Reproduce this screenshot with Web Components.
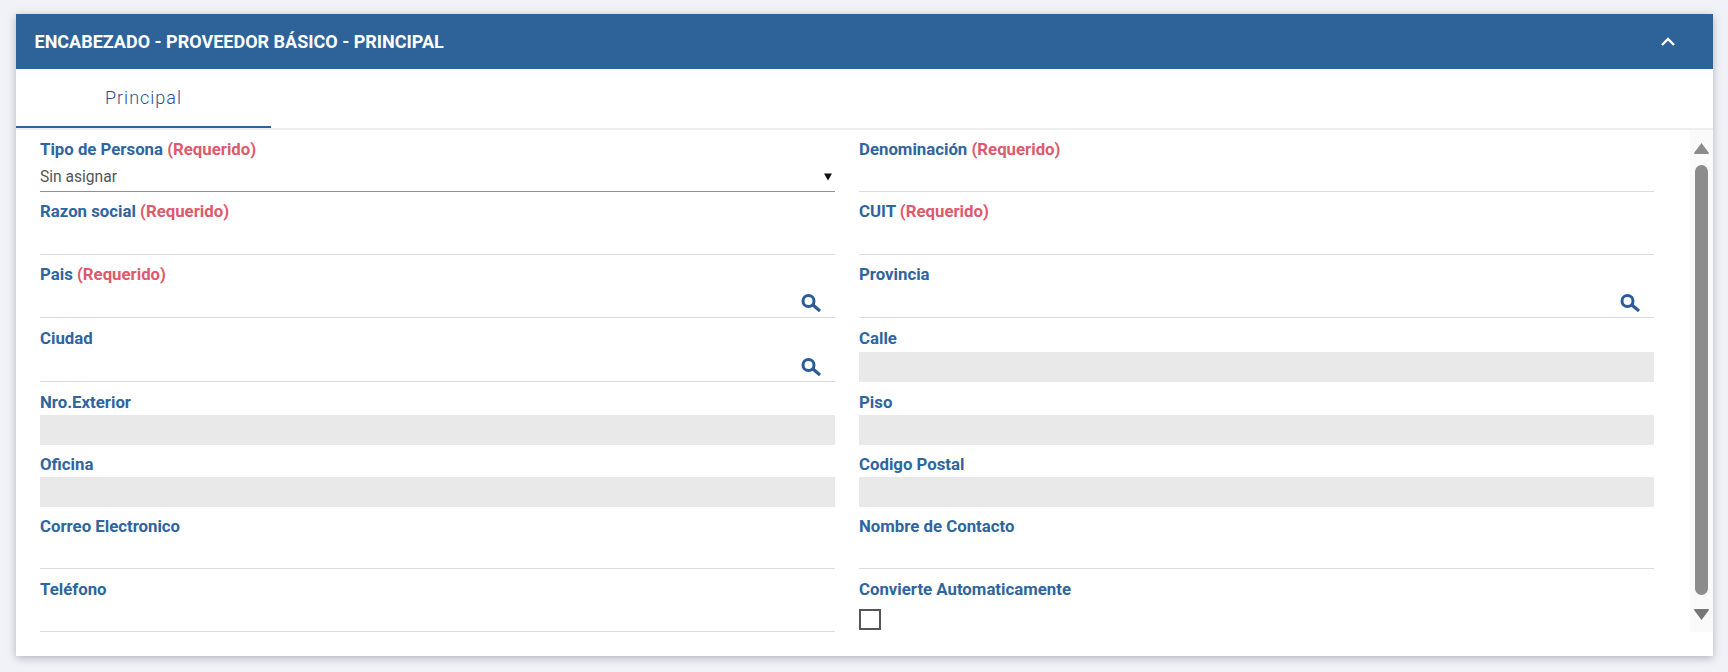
<!DOCTYPE html>
<html lang="es">
<head>
<meta charset="utf-8">
<title>Proveedor básico</title>
<style>
  html, body { margin: 0; height: 100%; }
  body { background: #f0f2f7; font-family: Roboto, "Liberation Sans", sans-serif; overflow: hidden; }
</style>
</head>
<body>
<form-panel title-text="ENCABEZADO - PROVEEDOR BÁSICO - PRINCIPAL">
  <panel-tab>Principal</panel-tab>
  <form-field kind="select" value="Sin asignar" required height="62">Tipo de Persona</form-field>
  <form-field required height="62">Denominación</form-field>
  <form-field required height="63">Razon social</form-field>
  <form-field required height="63">CUIT</form-field>
  <form-field kind="search" required height="63">Pais</form-field>
  <form-field kind="search" height="63">Provincia</form-field>
  <form-field kind="search" height="64" label-top="10">Ciudad</form-field>
  <form-field kind="disabled" height="64" label-top="10">Calle</form-field>
  <form-field kind="disabled" height="63" label-top="10">Nro.Exterior</form-field>
  <form-field kind="disabled" height="63" label-top="10">Piso</form-field>
  <form-field kind="disabled" height="62">Oficina</form-field>
  <form-field kind="disabled" height="62">Codigo Postal</form-field>
  <form-field height="62">Correo Electronico</form-field>
  <form-field height="62">Nombre de Contacto</form-field>
  <form-field height="63" label-top="10">Teléfono</form-field>
  <form-field kind="checkbox" height="63" label-top="10">Convierte Automaticamente</form-field>
</form-panel>

<script>
// pestaña del panel
class PanelTab extends HTMLElement {
  constructor() {
    super();
    this.attachShadow({ mode: "open" });
    this.shadowRoot.innerHTML = `
      <style>
        :host {
          display: flex; align-items: center; justify-content: center;
          width: 255px; height: 57px; box-sizing: border-box; padding-bottom: 2px;
          border-bottom: 2px solid #2e6399;
          color: #2b4f96; font-size: 18px; font-weight: 300; letter-spacing: 1px;
        }
      </style>
      <slot></slot>`;
  }
}

// campo del formulario: label + control segun "kind"
class FormField extends HTMLElement {
  constructor() {
    super();
    this.attachShadow({ mode: "open" });
  }
  connectedCallback() {
    const kind = this.getAttribute("kind") || "text";
    const required = this.hasAttribute("required") ? `<span class="req"> (Requerido)</span>` : "";
    const labelTop = this.getAttribute("label-top") || 9;
    let control = `<div class="control line"></div>`;
    if (kind === "select") {
      control = `<div class="control select"><span>${this.getAttribute("value")}</span>
        <svg width="8" height="8" viewBox="0 0 8 8"><polygon points="0,0.5 8,0.5 4,7.5" fill="#111"/></svg></div>`;
    } else if (kind === "search") {
      control = `<div class="control line search">
        <svg width="20" height="18" viewBox="0 0 20 18" fill="none" stroke="#2a5c9a">
          <circle cx="7.5" cy="7" r="5.5" stroke-width="3"/>
          <path d="M12 11 L19 17" stroke-width="3.2"/>
        </svg></div>`;
    } else if (kind === "disabled") {
      control = `<div class="control gray"></div>`;
    } else if (kind === "checkbox") {
      control = `<div class="control check"><div class="box"></div></div>`;
    }
    this.shadowRoot.innerHTML = `
      <style>
        :host { display: flex; flex-direction: column; height: ${this.getAttribute("height")}px; box-sizing: border-box; justify-content: flex-end; }
        label { display: block; height: 20px; line-height: 20px; margin-bottom: auto; padding-top: ${labelTop}px; font-size: 16.8px; font-weight: 700; color: #2f659e; white-space: nowrap; }
        .req { color: #dd5a6c; }
        .control { box-sizing: border-box; height: 29px; }
        .line { border-bottom: 1px solid #dcdcdc; }
        .search { display: flex; justify-content: flex-end; align-items: flex-start; padding: 5px 14px 0 0; }
        .select { display: flex; justify-content: space-between; align-items: center; border-bottom: 1px solid #8f8f8f; padding: 0 3px 0 0; font-size: 15.6px; color: #555; }
        .gray { background: #e9e9e9; height: 30px; }
        .check { height: 23px; }
        .box { width: 22px; height: 21px; box-sizing: border-box; border: 2px solid #555; }
      </style>
      <label><slot></slot>${required}</label>
      ${control}`;
  }
}

// barra de scroll dibujada
class ScrollRail extends HTMLElement {
  constructor() {
    super();
    this.attachShadow({ mode: "open" });
    this.shadowRoot.innerHTML = `
      <style>
        :host { display: flex; flex-direction: column; align-items: center; width: 23px; background: #fafafa; padding-top: 13px; box-sizing: border-box; }
        svg { display: block; flex: none; }
        .thumb { width: 13px; flex: 1; background: #8c8c8c; border-radius: 7px; margin: 11px 0 14px; }
        .down { margin-bottom: 12px; }
      </style>
      <svg width="15" height="11" viewBox="0 0 15 11"><path d="M7.5 0 L15 10 Q15 11 14 11 L1 11 Q0 11 0 10 Z" fill="#8c8c8c"/></svg>
      <div class="thumb"></div>
      <svg class="down" width="15" height="11" viewBox="0 0 15 11"><path d="M7.5 11 L15 1 Q15 0 14 0 L1 0 Q0 0 0 1 Z" fill="#777"/></svg>`;
  }
}

class FormPanel extends HTMLElement {
  constructor() {
    super();
    this.attachShadow({ mode: "open" });
    this.shadowRoot.innerHTML = `
      <style>
        :host {
          display: block; box-sizing: border-box;
          margin: 14px 15px 0 16px; height: 642px;
          background: #fff;
          box-shadow: 0 2px 8px rgba(60,64,80,.35);
        }
        header {
          display: flex; align-items: center; justify-content: space-between;
          height: 55px; padding: 0 38px 0 18.5px; box-sizing: border-box;
          background: #2e6399; color: #fff;
          font-size: 18px; font-weight: 700;
        }
        header svg { display: block; }
        .tabs { display: flex; height: 59px; padding-top: 2px; box-sizing: border-box; }
        .body { display: flex; height: 502px; border-top: 2px solid #eeeeee; box-sizing: content-box; }
        .grid {
          flex: 1; display: grid; grid-template-columns: 795px 795px; column-gap: 24px;
          align-content: start; padding-left: 24px;
        }
      </style>
      <header>
        <span id="title"></span>
        <svg width="14" height="9" viewBox="0 0 14 9" fill="none" stroke="#fff" stroke-width="2.4"><path d="M1 8 L7 2 L13 8"/></svg>
      </header>
      <div class="tabs"><slot name="tab"></slot></div>
      <div class="body">
        <div class="grid"><slot></slot></div>
        <scroll-rail></scroll-rail>
      </div>`;
  }
  connectedCallback() {
    this.shadowRoot.querySelector("#title").textContent = this.getAttribute("title-text");
    this.querySelector("panel-tab").slot = "tab";
  }
}

customElements.define("panel-tab", PanelTab);
customElements.define("form-field", FormField);
customElements.define("scroll-rail", ScrollRail);
customElements.define("form-panel", FormPanel);
</script>
</body>
</html>
